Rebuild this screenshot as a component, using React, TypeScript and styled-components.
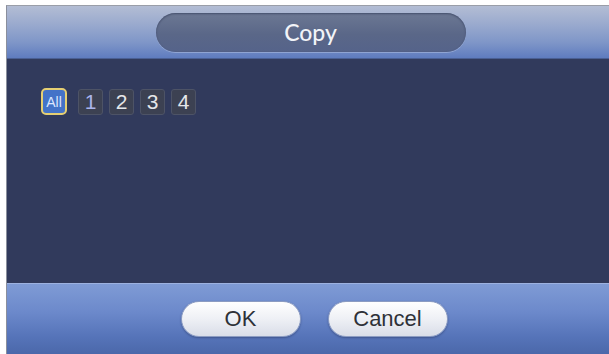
import React from "react";
import styled, { createGlobalStyle } from "styled-components";

const GlobalStyle = createGlobalStyle`
  html, body {
    margin: 0;
    padding: 0;
    background: #ffffff;
    width: 609px;
    height: 354px;
    overflow: hidden;
  }
`;

const Page = styled.div`
  padding: 5px 0 0 6px;
  width: 609px;
  height: 354px;
  box-sizing: border-box;
`;

const Dialog = styled.div`
  display: flex;
  flex-direction: column;
  height: 349px;
  border-left: 1px solid #8a8f9c;
  border-top: 1px solid #9a9ea8;
  box-sizing: border-box;
`;

const Header = styled.div`
  height: 52px;
  display: flex;
  align-items: center;
  justify-content: center;
  padding-left: 5px;
  background: linear-gradient(
    to bottom,
    #b3bdd4 0%,
    #9aaace 35%,
    #7f96c8 70%,
    #5f7cbf 100%
  );
  border-bottom: 1px solid #4a5f93;
`;

const TitlePill = styled.div`
  width: 310px;
  height: 39px;
  border-radius: 20px;
  display: flex;
  align-items: center;
  justify-content: center;
  background: linear-gradient(to bottom, #6c7893 0%, #5a6788 55%, #55638a 100%);
  box-shadow: inset 0 1px 2px rgba(40, 50, 80, 0.6),
    0 1px 0 rgba(200, 210, 235, 0.4);
  color: #f2f4f8;
  font-family: Lato, "Open Sans", sans-serif;
  font-size: 23px;
  font-weight: 500;
`;

const Content = styled.div`
  flex: 1;
  background: #313a5c;
  padding: 29px 0 0 34px;
`;

const ChannelRow = styled.div`
  display: flex;
  align-items: center;
  gap: 6px;
`;

const ChannelBox = styled.div<{ $all?: boolean; $current?: boolean }>`
  width: ${({ $all }) => ($all ? "26px" : "25px")};
  height: ${({ $all }) => ($all ? "27px" : "26px")};
  box-sizing: border-box;
  display: flex;
  align-items: center;
  justify-content: center;
  border-radius: ${({ $all }) => ($all ? "5px" : "3px")};
  border: ${({ $all }) => ($all ? "2px solid #e6cf72" : "1px solid #4d5366")};
  background: ${({ $all }) => ($all ? "#4473c8" : "#3c4152")};
  color: ${({ $all, $current }) =>
    $all ? "#dce6ff" : $current ? "#a9b4ec" : "#e4e6ea"};
  font-family: "Liberation Sans", Arial, sans-serif;
  font-size: ${({ $all }) => ($all ? "14px" : "21px")};
  margin-right: ${({ $all }) => ($all ? "5px" : "0")};
`;

const Footer = styled.div`
  height: 70px;
  display: flex;
  align-items: center;
  justify-content: center;
  gap: 27px;
  padding: 0 0 0 12px;
  background: linear-gradient(
    to bottom,
    #7f9bd5 0%,
    #6c89cb 40%,
    #5674b9 75%,
    #4b68aa 100%
  );
  border-top: 1px solid #9db2e0;
`;

const Button = styled.button`
  width: 120px;
  height: 36px;
  border-radius: 18px;
  border: 1px solid #8c9cc2;
  background: linear-gradient(to bottom, #ffffff 0%, #eef0f5 50%, #d9dde8 100%);
  box-shadow: 0 1px 2px rgba(30, 40, 80, 0.4);
  color: #2e3138;
  font-family: "Liberation Sans", Arial, sans-serif;
  font-size: 22px;
  padding: 0;
  cursor: pointer;
`;

export default function App() {
  const channels = ["1", "2", "3", "4"];
  return (
    <>
      <GlobalStyle />
      <Page>
        <Dialog>
          <Header>
            <TitlePill>Copy</TitlePill>
          </Header>
          <Content>
            <ChannelRow>
              <ChannelBox $all>All</ChannelBox>
              {channels.map((c) => (
                <ChannelBox key={c} $current={c === "1"}>
                  {c}
                </ChannelBox>
              ))}
            </ChannelRow>
          </Content>
          <Footer>
            <Button>OK</Button>
            <Button>Cancel</Button>
          </Footer>
        </Dialog>
      </Page>
    </>
  );
}
